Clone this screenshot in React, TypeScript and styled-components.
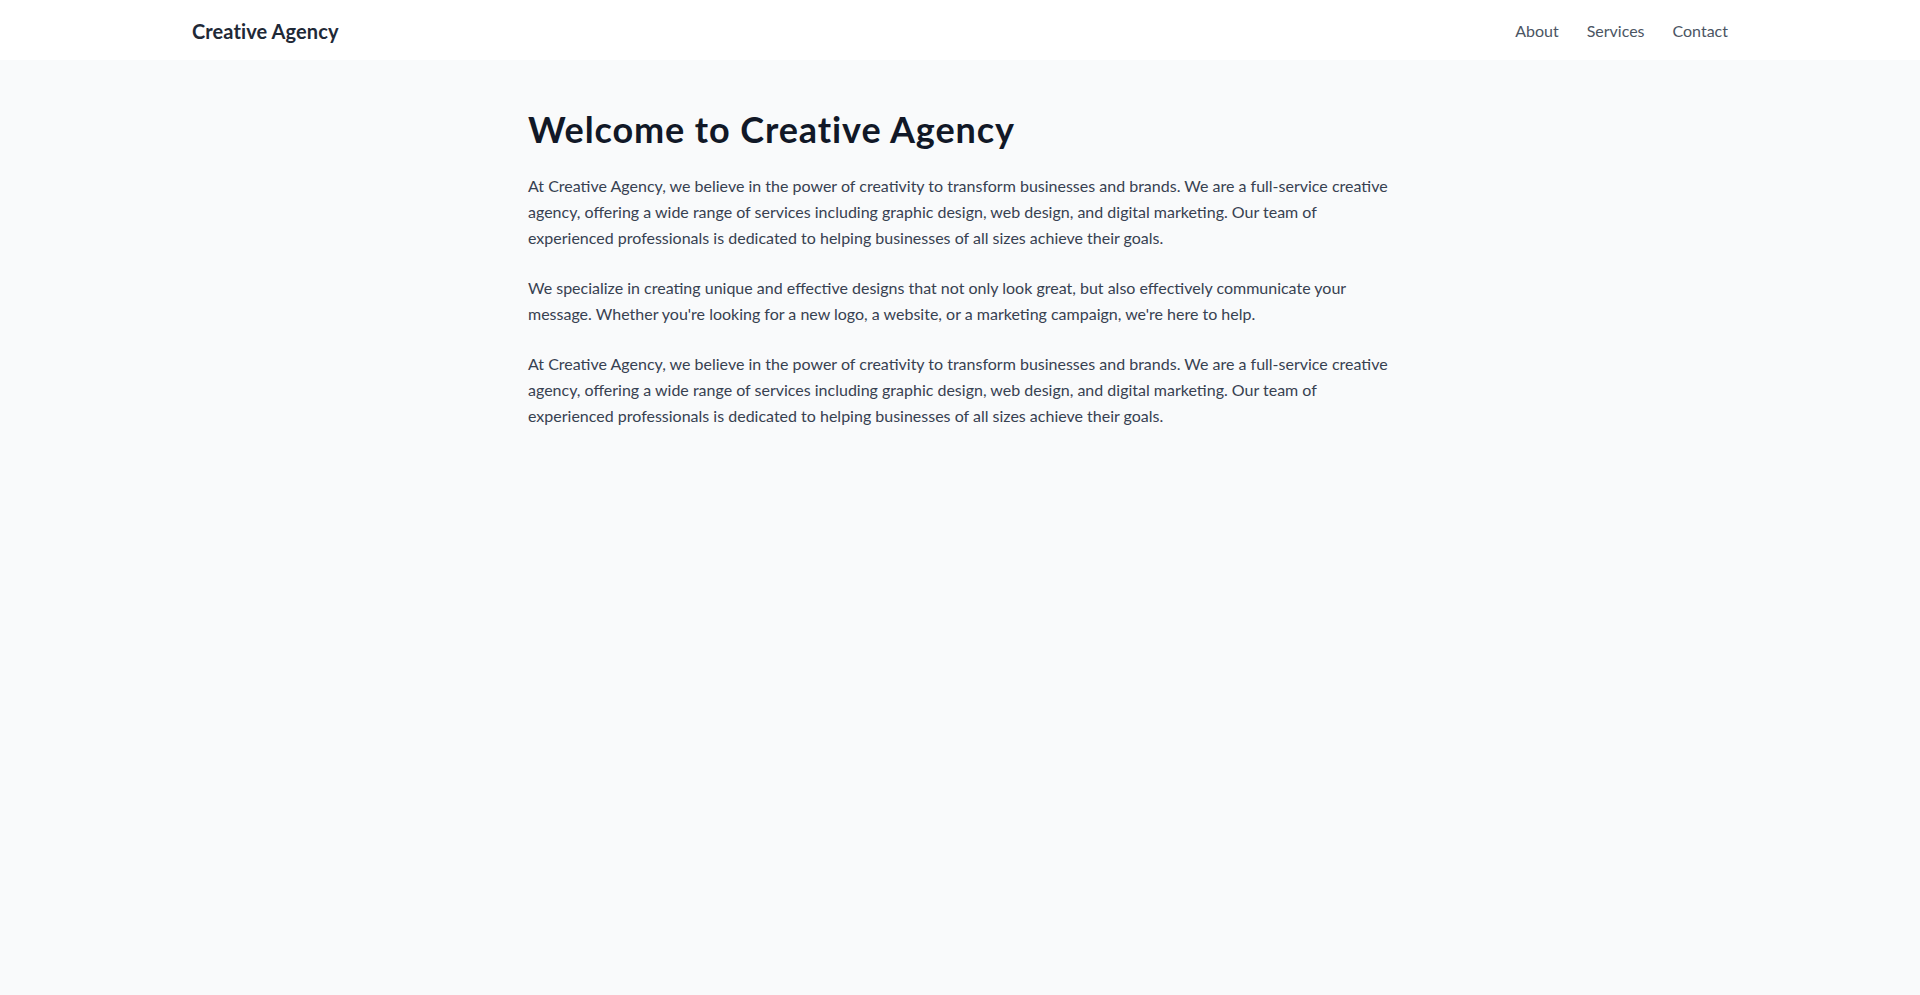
import React from "react";
import styled, { createGlobalStyle } from "styled-components";

const GlobalStyle = createGlobalStyle`
  html, body {
    margin: 0;
    padding: 0;
    background: #f9fafb;
  }
  body {
    font-family: "Lato", "Open Sans", sans-serif;
    -webkit-font-smoothing: antialiased;
  }
  #root {
    min-height: 100vh;
  }
`;

const Page = styled.div`
  min-height: 100vh;
  background: #f9fafb;
  display: flex;
  flex-direction: column;
`;

const Header = styled.header`
  background: #ffffff;
`;

const HeaderInner = styled.div`
  max-width: 1536px;
  margin: 0 auto;
  height: 60px;
  display: flex;
  align-items: center;
  justify-content: space-between;
`;

const Logo = styled.a`
  font-size: 20px;
  line-height: 28px;
  font-weight: 700;
  letter-spacing: 0.1px;
  color: #1f2937;
  text-decoration: none;
  padding-top: 2px;
`;

const Nav = styled.nav`
  display: flex;
  align-items: center;
  gap: 28px;
`;

const NavLink = styled.a`
  font-size: 16px;
  line-height: 24px;
  color: #4b5563;
  text-decoration: none;
  padding-top: 1px;
`;

const Main = styled.main`
  max-width: 896px;
  width: 100%;
  box-sizing: border-box;
  margin: 0 auto;
  padding: 49px 16px;
`;

const Title = styled.h1`
  margin: 0 0 24px;
  font-size: 36px;
  line-height: 40px;
  font-weight: 700;
  letter-spacing: 0.9px;
  color: #111827;
`;

const Paragraph = styled.p`
  margin: 0 0 24px;
  font-size: 16px;
  line-height: 26px;
  color: #374151;
`;

const intro =
  "At Creative Agency, we believe in the power of creativity to transform businesses and brands. We are a full-service creative agency, offering a wide range of services including graphic design, web design, and digital marketing. Our team of experienced professionals is dedicated to helping businesses of all sizes achieve their goals.";

const paragraphs = [
  intro,
  "We specialize in creating unique and effective designs that not only look great, but also effectively communicate your message. Whether you're looking for a new logo, a website, or a marketing campaign, we're here to help.",
  intro,
];

export default function App() {
  return (
    <>
      <GlobalStyle />
      <Page>
        <Header>
          <HeaderInner>
            <Logo href="#">Creative Agency</Logo>
            <Nav>
              <NavLink href="#">About</NavLink>
              <NavLink href="#">Services</NavLink>
              <NavLink href="#">Contact</NavLink>
            </Nav>
          </HeaderInner>
        </Header>
        <Main>
          <Title>Welcome to Creative Agency</Title>
          {paragraphs.map((text, i) => (
            <Paragraph key={i}>{text}</Paragraph>
          ))}
        </Main>
      </Page>
    </>
  );
}
